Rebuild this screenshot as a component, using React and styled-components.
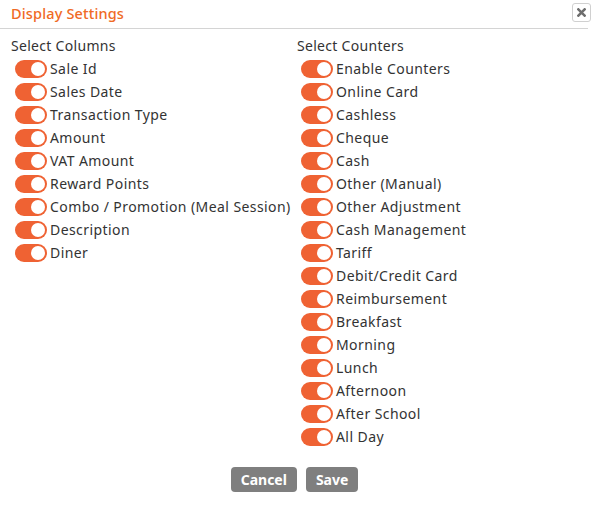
import React from 'react'
import styled, { createGlobalStyle } from 'styled-components'

const GlobalStyle = createGlobalStyle`
  html, body {
    margin: 0;
    padding: 0;
    background: #fff;
  }
  body {
    font-family: 'Noto Sans', 'Open Sans', sans-serif;
    color: #333;
  }
`

const columns = [
  'Sale Id',
  'Sales Date',
  'Transaction Type',
  'Amount',
  'VAT Amount',
  'Reward Points',
  'Combo / Promotion (Meal Session)',
  'Description',
  'Diner'
]

const counters = [
  'Enable Counters',
  'Online Card',
  'Cashless',
  'Cheque',
  'Cash',
  'Other (Manual)',
  'Other Adjustment',
  'Cash Management',
  'Tariff',
  'Debit/Credit Card',
  'Reimbursement',
  'Breakfast',
  'Morning',
  'Lunch',
  'Afternoon',
  'After School',
  'All Day'
]

const App = () => {
  return (
    <>
      <GlobalStyle />
      <Dialog>
        <Header>
          <Title>Display Settings</Title>
          <CloseButton aria-label='close'>
            <svg width='9' height='9' viewBox='0 0 10 10'>
              <path d='M1.5 1.5 L8.5 8.5 M8.5 1.5 L1.5 8.5' stroke='#6e6e6e' strokeWidth='2.8' strokeLinecap='square' />
            </svg>
          </CloseButton>
        </Header>
        <Body>
          <Column>
            <SectionTitle>Select Columns</SectionTitle>
            {columns.map(label => (
              <Row key={label}>
                <Toggle />
                <Label>{label}</Label>
              </Row>
            ))}
          </Column>
          <Column>
            <SectionTitle>Select Counters</SectionTitle>
            {counters.map(label => (
              <Row key={label}>
                <Toggle />
                <Label>{label}</Label>
              </Row>
            ))}
          </Column>
        </Body>
        <Footer>
          <Button>Cancel</Button>
          <Button>Save</Button>
        </Footer>
      </Dialog>
    </>
  )
}

export default App

const Dialog = styled.div`
  width: 594px;
  height: 505px;
  display: flex;
  flex-direction: column;
`

const Header = styled.div`
  height: 28px;
  display: flex;
  align-items: center;
  justify-content: space-between;
  padding: 0 4px 0 11px;
  border-bottom: 1px solid #d4d4d4;
  margin-right: 6px;
`

const Title = styled.div`
  color: #f06a25;
  font-size: 14.5px;
  font-weight: 500;
  letter-spacing: 0.15px;
  margin-top: -3px;
`

const CloseButton = styled.button`
  flex-shrink: 0;
  box-sizing: border-box;
  width: 19px;
  height: 19px;
  padding: 0;
  display: flex;
  align-items: center;
  justify-content: center;
  background: #fff;
  border: 1px solid #d0d0d0;
  border-radius: 3px;
  margin-top: -3px;
  margin-right: -7px;
`

const Body = styled.div`
  display: grid;
  grid-template-columns: 286px 1fr;
  padding: 8px 11px 0;
`

const Column = styled.div`
  display: flex;
  flex-direction: column;
`

const SectionTitle = styled.div`
  font-size: 14px;
  line-height: 18px;
  letter-spacing: 0.3px;
  margin-bottom: 2px;
`

const Row = styled.div`
  display: flex;
  align-items: center;
  height: 23px;
  padding-left: 4px;
  gap: 3px;
`

const Toggle = styled.span`
  position: relative;
  width: 32px;
  height: 18px;
  border-radius: 9px;
  background: #ef6233;
  flex-shrink: 0;

  &::after {
    content: '';
    position: absolute;
    right: 2px;
    top: 2px;
    width: 14px;
    height: 14px;
    border-radius: 50%;
    background: #fff;
  }
`

const Label = styled.span`
  font-size: 14px;
  letter-spacing: 0.42px;
  color: #333;
  white-space: nowrap;
`

const Footer = styled.div`
  display: flex;
  justify-content: center;
  gap: 9px;
  margin-top: 19px;
  padding-right: 5px;
`

const Button = styled.button`
  height: 25px;
  padding: 0 10px;
  background: #7f7f7f;
  color: #fff;
  border: none;
  border-radius: 4px;
  font-family: 'Noto Sans', sans-serif;
  font-weight: 700;
  font-size: 14px;
`
